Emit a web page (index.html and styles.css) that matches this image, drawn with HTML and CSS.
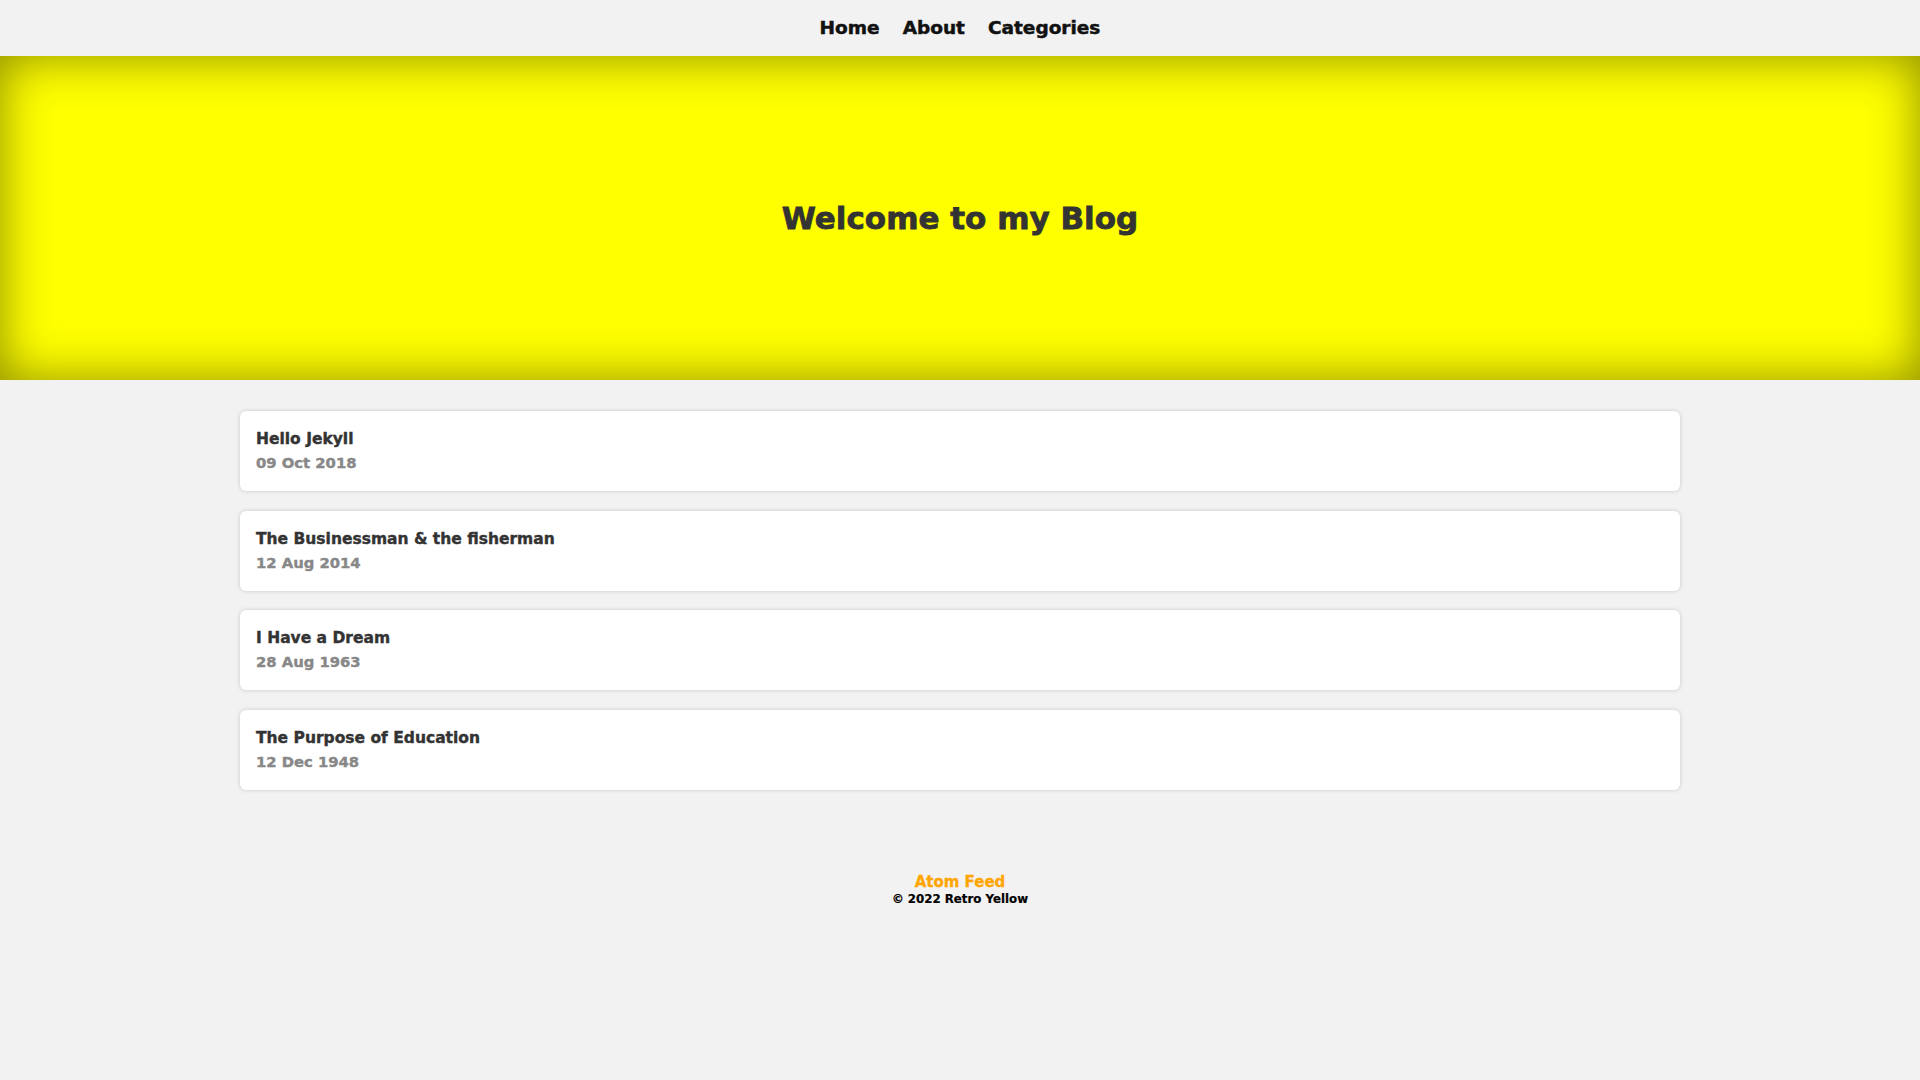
FILE: index.html
```html
<!DOCTYPE html>
<html lang="en">
<head>
<meta charset="utf-8">
<title>Retro Yellow</title>
<link rel="stylesheet" href="styles.css">
</head>
<body>
<nav class="nav">
  <a class="nav-link" href="#">Home</a>
  <a class="nav-link" href="#">About</a>
  <a class="nav-link" href="#">Categories</a>
</nav>
<header class="hero">
  <h1 class="hero-title">Welcome to my Blog</h1>
</header>
<main class="posts">
  <a class="post" href="#">
    <span class="post-title">Hello Jekyll</span>
    <span class="post-date">09 Oct 2018</span>
  </a>
  <a class="post" href="#">
    <span class="post-title">The Businessman &amp; the fisherman</span>
    <span class="post-date">12 Aug 2014</span>
  </a>
  <a class="post" href="#">
    <span class="post-title">I Have a Dream</span>
    <span class="post-date">28 Aug 1963</span>
  </a>
  <a class="post" href="#">
    <span class="post-title">The Purpose of Education</span>
    <span class="post-date">12 Dec 1948</span>
  </a>
</main>
<footer class="footer">
  <a class="feed" href="#">Atom Feed</a>
  <span class="copy">© 2022 Retro Yellow</span>
</footer>
</body>
</html>
```
FILE: styles.css
```css
html, body {
  margin: 0;
  padding: 0;
}
body {
  background: #f2f2f2;
  font-family: "DejaVu Sans", "Liberation Sans", sans-serif;
  color: #333;
  min-height: 1080px;
}
a {
  text-decoration: none;
}
.nav {
  height: 56px;
  box-sizing: border-box;
  padding-bottom: 2px;
  display: flex;
  justify-content: center;
  align-items: center;
  gap: 23px;
}
.nav-link {
  color: #111;
  font-weight: 700;
  font-size: 18.5px;
  -webkit-text-stroke: 0.5px #111;
}
.hero {
  height: 324px;
  background: #ffff00;
  box-shadow: inset 0 0 50px rgba(0, 0, 0, 0.46);
  display: flex;
  align-items: center;
  justify-content: center;
}
.hero-title {
  margin: 0;
  font-size: 31px;
  font-weight: 700;
  color: #333;
  -webkit-text-stroke: 0.8px #333;
}
.posts {
  width: 1440px;
  margin: 31px auto 0;
  display: flex;
  flex-direction: column;
  gap: 19.5px;
}
.post {
  height: 80px;
  box-sizing: border-box;
  background: #fff;
  border-radius: 6px;
  box-shadow: 0 0 4px rgba(0, 0, 0, 0.18);
  padding: 17px 16px 0;
  display: flex;
  flex-direction: column;
}
.post-title {
  font-size: 15.5px;
  font-weight: 700;
  color: #333;
  line-height: 23px;
  -webkit-text-stroke: 0.4px #333;
}
.post-date {
  font-size: 14.8px;
  font-weight: 700;
  color: #888;
  line-height: 23px;
  -webkit-text-stroke: 0.4px #888;
}
.footer {
  margin-top: 83px;
  display: flex;
  flex-direction: column;
  align-items: center;
}
.feed {
  color: #ffa500;
  font-size: 15px;
  font-weight: 700;
  line-height: 18px;
  -webkit-text-stroke: 0.3px #ffa500;
}
.copy {
  color: #000;
  font-size: 11.8px;
  font-weight: 700;
  line-height: 16px;
  -webkit-text-stroke: 0.2px #000;
}
```
